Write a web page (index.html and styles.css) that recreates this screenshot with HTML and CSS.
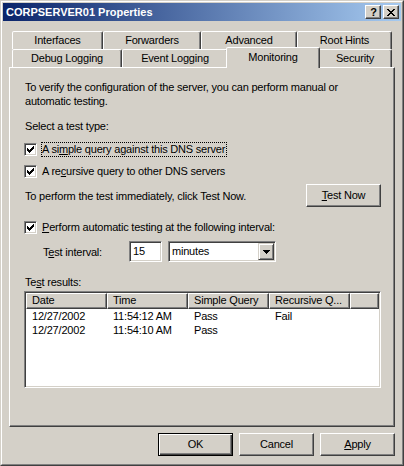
FILE: index.html
```html
<!DOCTYPE html>
<html>
<head>
<meta charset="utf-8">
<title>CORPSERVER01 Properties</title>
<link rel="stylesheet" href="styles.css">
</head>
<body>
<div class="win">
  <div class="win-in">
    <div class="titlebar">
      <span class="title">CORPSERVER01 Properties</span>
      <div class="tbtns">
        <div class="tbtn tbtn-help">?</div>
        <div class="tbtn">
          <svg width="8" height="7" viewBox="0 0 8 7" shape-rendering="crispEdges">
            <path d="M0 0h2v1h-2zM6 0h2v1h-2zM1 1h2v1h-2zM5 1h2v1h-2zM2 2h4v1h-4zM3 3h2v1h-2zM2 4h4v1h-4zM1 5h2v1h-2zM5 5h2v1h-2zM0 6h2v1h-2zM6 6h2v1h-2z" fill="#000"/>
          </svg>
        </div>
      </div>
    </div>

    <div class="body">
      <div class="tabs">
        <div class="tabrow">
          <div class="tab t-int">Interfaces</div>
          <div class="tab t-fwd">Forwarders</div>
          <div class="tab t-adv">Advanced</div>
          <div class="tab t-root">Root Hints</div>
        </div>
        <div class="tabrow">
          <div class="tab t-dbg">Debug Logging</div>
          <div class="tab t-evt">Event Logging</div>
          <div class="tab t-mon sel">Monitoring</div>
          <div class="tab t-sec">Security</div>
        </div>
      </div>

      <div class="panel">
        <p class="intro">To verify the configuration of the server, you can perform manual or automatic testing.</p>
        <p class="sel-label">Select a test type:</p>

        <div class="chkrow r1">
          <span class="chk"><svg width="7" height="7" viewBox="0 0 7 7" shape-rendering="crispEdges"><path d="M0 2h1v3h-1zM1 3h1v3h-1zM2 4h1v3h-1zM3 3h1v3h-1zM4 2h1v3h-1zM5 1h1v3h-1zM6 0h1v3h-1z" fill="#000"/></svg></span>
          <span class="lbl focus">A si<u>m</u>ple query against this DNS server</span>
        </div>
        <div class="chkrow r2">
          <span class="chk"><svg width="7" height="7" viewBox="0 0 7 7" shape-rendering="crispEdges"><path d="M0 2h1v3h-1zM1 3h1v3h-1zM2 4h1v3h-1zM3 3h1v3h-1zM4 2h1v3h-1zM5 1h1v3h-1zM6 0h1v3h-1z" fill="#000"/></svg></span>
          <span class="lbl">A re<u>c</u>ursive query to other DNS servers</span>
        </div>

        <div class="nowrow">
          <span>To perform the test immediately, click Test Now.</span>
          <div class="btn"><span><u>T</u>est Now</span></div>
        </div>

        <div class="chkrow r3">
          <span class="chk"><svg width="7" height="7" viewBox="0 0 7 7" shape-rendering="crispEdges"><path d="M0 2h1v3h-1zM1 3h1v3h-1zM2 4h1v3h-1zM3 3h1v3h-1zM4 2h1v3h-1zM5 1h1v3h-1zM6 0h1v3h-1z" fill="#000"/></svg></span>
          <span class="lbl"><u>P</u>erform automatic testing at the following interval:</span>
        </div>

        <div class="introw">
          <span class="intlbl">T<u>e</u>st interval:</span>
          <div class="edit">15</div>
          <div class="combo">
            <span class="combo-text">minutes</span>
            <div class="dd">
              <svg width="7" height="4" viewBox="0 0 7 4" shape-rendering="crispEdges"><path d="M0 0h7v1h-7zM1 1h5v1h-5zM2 2h3v1h-3zM3 3h1v1h-1z" fill="#000"/></svg>
            </div>
          </div>
        </div>

        <p class="res-label">Te<u>s</u>t results:</p>

        <div class="list">
          <div class="lhead">
            <div class="hcell">Date</div>
            <div class="hcell">Time</div>
            <div class="hcell">Simple Query</div>
            <div class="hcell">Recursive Q...</div>
            <div class="hcell filler"></div>
          </div>
          <div class="lrow">
            <div class="cell">12/27/2002</div>
            <div class="cell">11:54:12 AM</div>
            <div class="cell">Pass</div>
            <div class="cell">Fail</div>
          </div>
          <div class="lrow">
            <div class="cell">12/27/2002</div>
            <div class="cell">11:54:10 AM</div>
            <div class="cell">Pass</div>
            <div class="cell"></div>
          </div>
        </div>
      </div>

      <div class="btnrow">
        <div class="btn default"><span>OK</span></div>
        <div class="btn"><span>Cancel</span></div>
        <div class="btn"><span><u>A</u>pply</span></div>
      </div>
    </div>
  </div>
</div>
</body>
</html>
```

FILE: styles.css
```css
* { box-sizing: border-box; }

html, body {
  margin: 0;
  padding: 0;
}

body {
  width: 404px;
  height: 466px;
  overflow: hidden;
  background: #D4D0C8;
  font-family: "Liberation Sans", Arial, sans-serif;
  font-size: 11px;
  color: #000;
  letter-spacing: -0.2px;
}

p { margin: 0; }
u { text-decoration: underline; text-underline-offset: 1px; }

.win {
  width: 404px;
  height: 466px;
  border: 1px solid;
  border-color: #D4D0C8 #404040 #404040 #D4D0C8;
  background: #D4D0C8;
}

.win-in {
  height: 100%;
  border: 1px solid;
  border-color: #fff #808080 #808080 #fff;
  padding: 1px;
  display: flex;
  flex-direction: column;
}

.titlebar {
  flex: none;
  height: 18px;
  background: linear-gradient(to right, #0A246A, #A6CAF0);
  display: flex;
  align-items: center;
  justify-content: space-between;
  padding: 0 2px 0 3px;
}

.title {
  color: #fff;
  font-weight: bold;
  letter-spacing: 0;
  line-height: 18px;
}

.tbtns {
  display: flex;
  gap: 2px;
}

.tbtn {
  width: 16px;
  height: 14px;
  background: #D4D0C8;
  border: 1px solid;
  border-color: #fff #404040 #404040 #fff;
  box-shadow: inset -1px -1px #808080;
  display: flex;
  align-items: center;
  justify-content: center;
}

.tbtn-help {
  font-weight: bold;
  font-size: 11px;
  line-height: 12px;
  letter-spacing: 0;
  padding-left: 1px;
}

.body {
  flex: 1;
  display: flex;
  flex-direction: column;
  padding: 10px 6px 0;
}

.tabs {
  display: flex;
  flex-direction: column;
}

.tabrow {
  display: flex;
  height: 18px;
  padding-left: 3px;
}

.tab {
  flex: none;
  height: 18px;
  background: #D4D0C8;
  border: 1px solid;
  border-bottom: 0;
  border-color: #fff #404040 transparent #fff;
  box-shadow: inset -1px 0 #808080;
  border-radius: 2px 2px 0 0;
  display: flex;
  align-items: center;
  justify-content: center;
  padding-bottom: 1px;
}

.t-int { width: 91px; }
.t-fwd { width: 98px; }
.t-adv { width: 96px; }
.t-root { width: 95px; }
.t-dbg { width: 110px; }
.t-evt { width: 106px; }
.t-mon { width: 90px; }
.t-sec { width: 74px; }

.tab.sel {
  position: relative;
  z-index: 2;
  width: 94px;
  height: 21px;
  margin: -2px -2px 0;
  padding-bottom: 3px;
}

.panel {
  height: 360px;
  border: 1px solid;
  border-color: #fff #404040 #404040 #fff;
  box-shadow: inset -1px -1px #808080;
  padding: 0 13px 0 15px;
  display: flex;
  flex-direction: column;
}

.intro {
  margin-top: 12px;
  line-height: 14px;
  width: 340px;
}

.sel-label {
  margin-top: 11px;
  line-height: 14px;
}

.chkrow {
  display: flex;
  align-items: center;
  height: 15px;
  margin-left: -1px;
}
.chkrow.r1 { margin-top: 9px; }
.chkrow.r2 { margin-top: 7px; }
.chkrow.r3 { margin-top: 13px; }

.chk {
  width: 13px;
  height: 13px;
  flex: none;
  background: #fff;
  border: 1px solid;
  border-color: #808080 #fff #fff #808080;
  box-shadow: inset 1px 1px #404040, inset -1px -1px #D4D0C8;
  display: flex;
  align-items: center;
  justify-content: center;
}

.lbl {
  margin-left: 4px;
  height: 15px;
  line-height: 13px;
  border: 1px solid transparent;
  padding: 0 1px 0 0;
}

.lbl.focus {
  border: 1px dotted #000;
}

.nowrow {
  margin-top: 5px;
  display: flex;
  align-items: center;
  justify-content: space-between;
  height: 23px;
}

.btn {
  width: 75px;
  height: 23px;
  flex: none;
  background: #D4D0C8;
  border: 1px solid;
  border-color: #fff #404040 #404040 #fff;
  box-shadow: inset -1px -1px #808080;
  display: flex;
  align-items: center;
  justify-content: center;
  padding-bottom: 1px;
}

.btn.default {
  border-color: #000;
  box-shadow: inset 1px 1px #fff, inset -1px -1px #404040, inset -2px -2px #808080;
}

.introw {
  margin-top: 6px;
  height: 21px;
  display: flex;
  align-items: center;
  padding-left: 18px;
}

.intlbl {
  width: 86px;
  flex: none;
}

.edit {
  width: 33px;
  height: 21px;
  flex: none;
  background: #fff;
  border: 1px solid;
  border-color: #808080 #fff #fff #808080;
  box-shadow: inset 1px 1px #404040, inset -1px -1px #D4D0C8;
  padding: 0 0 0 3px;
  line-height: 19px;
  margin-right: 6px;
}

.combo {
  width: 108px;
  height: 21px;
  flex: none;
  background: #fff;
  border: 1px solid;
  border-color: #808080 #fff #fff #808080;
  box-shadow: inset 1px 1px #404040, inset -1px -1px #D4D0C8;
  display: flex;
  align-items: center;
  justify-content: space-between;
  padding: 1px 1px 1px 3px;
}

.combo-text {
  line-height: 17px;
}

.dd {
  width: 16px;
  height: 17px;
  background: #D4D0C8;
  border: 1px solid;
  border-color: #D4D0C8 #404040 #404040 #D4D0C8;
  box-shadow: inset 1px 1px #fff, inset -1px -1px #808080;
  display: flex;
  align-items: center;
  justify-content: center;
}

.res-label {
  margin-top: 13px;
  line-height: 14px;
}

.list {
  margin-top: 2px;
  margin-left: -1px;
  width: 357px;
  height: 97px;
  background: #fff;
  border: 1px solid;
  border-color: #808080 #fff #fff #808080;
  box-shadow: inset 1px 1px #404040, inset -1px -1px #D4D0C8;
  padding: 1px;
}

.lhead {
  display: flex;
  height: 16px;
}

.hcell {
  width: 81px;
  flex: none;
  height: 16px;
  background: #D4D0C8;
  border: 1px solid;
  border-color: #fff #404040 #404040 #fff;
  box-shadow: inset -1px -1px #808080;
  padding-left: 5px;
  line-height: 13px;
  white-space: nowrap;
  overflow: hidden;
}

.hcell.filler {
  flex: 1;
  width: auto;
}

.lrow {
  display: flex;
  height: 14px;
  line-height: 14px;
}

.cell {
  width: 81px;
  flex: none;
  padding-left: 6px;
  white-space: nowrap;
}

.btnrow {
  margin-top: 6px;
  display: flex;
  justify-content: flex-end;
  gap: 6px;
}
```
